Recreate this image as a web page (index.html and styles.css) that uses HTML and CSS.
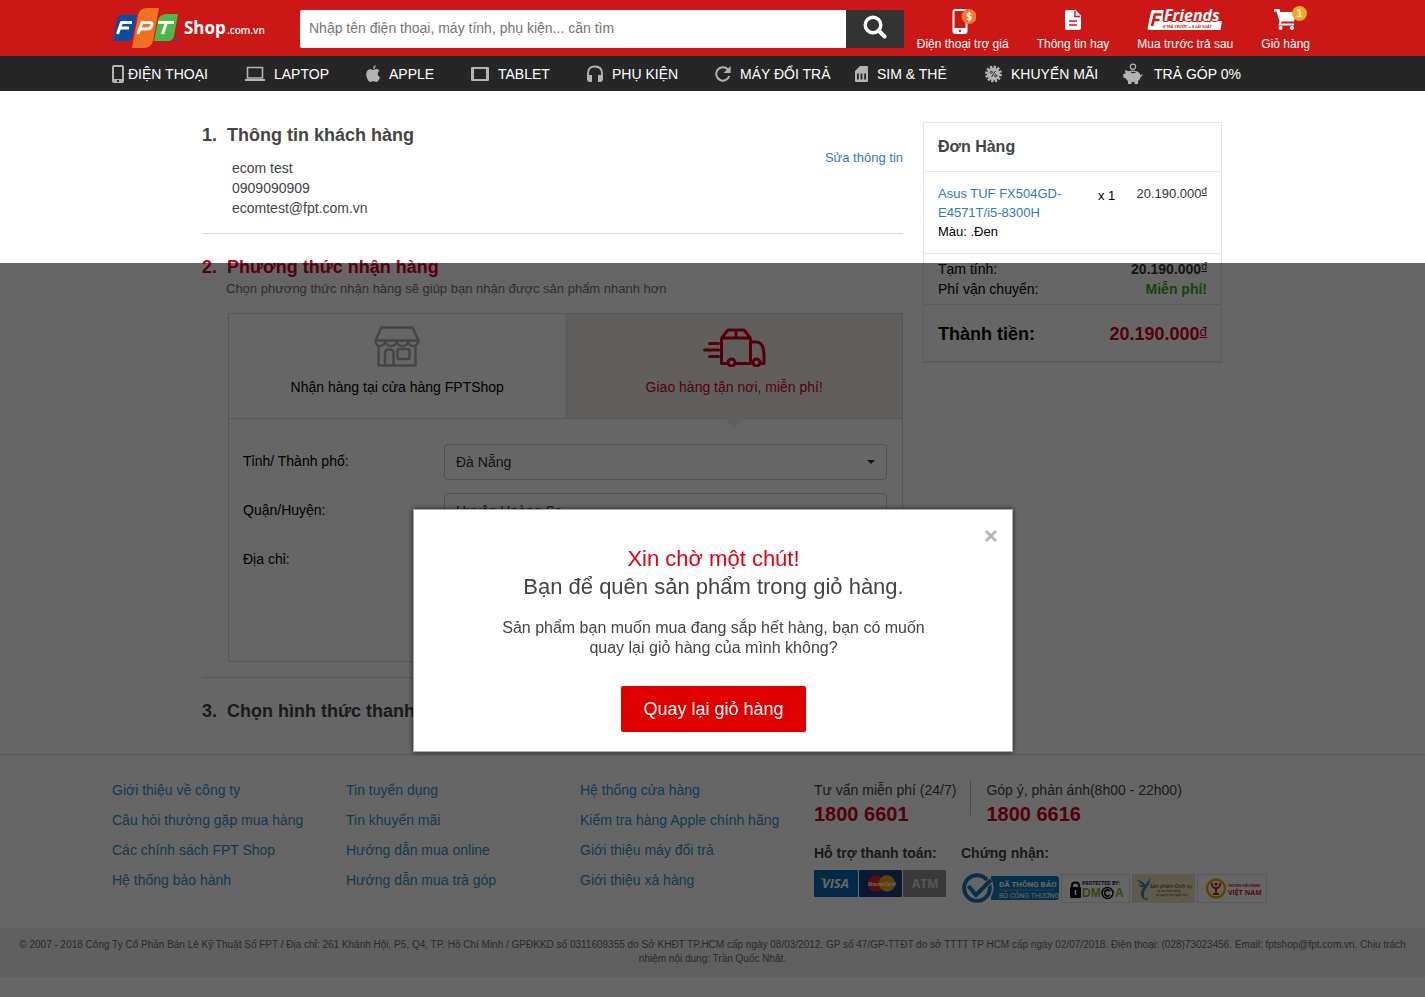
FILE: index.html
```html
<!DOCTYPE html>
<html lang="vi">
<head>
<meta charset="utf-8">
<meta name="viewport" content="width=device-width, initial-scale=1">
<title>FPT Shop - Đặt hàng</title>
<link rel="stylesheet" href="styles.css">
</head>
<body>
<header class="top">
  <div class="wrap top-row">
    <a class="logo" href="#" aria-label="FPT Shop">
      <svg width="154" height="42" viewBox="0 0 154 42">
        <path d="M7 9H25L20 32Q19 35 16 35H1L5 13Q6 9 9 9Z" fill="#0a4da2"/>
        <path d="M55 8H66L62 30Q61 35 56 35H42L46 14Q48 8 55 8Z" fill="#4db848"/>
        <path d="M35 2H47L41 35Q39 42 32 42H20L26 9Q28 2 35 2Z" fill="#f37021"/>
        <g fill="none" stroke="#fff" stroke-width="3" stroke-linejoin="round"><path d="M20 16.500H9.500L5.500 28M8 22H17"/><path d="M26 28L30 16.500H38Q41 17 39.500 20Q38 23 35 23H28"/><path d="M46 16.500H62M54.500 16.500L50.500 28"/></g>
        <circle cx="65.500" cy="33" r="2" fill="none" stroke="#32509a"/>
        <text x="72" y="28" class="logo-shop">Shop</text>
        <text x="115" y="28" class="logo-dom">.com.vn</text>
      </svg>
    </a>
    <form class="search">
      <input type="search" aria-label="Tìm kiếm" placeholder="Nhập tên điện thoại, máy tính, phụ kiện... cần tìm">
      <button type="button" aria-label="Tìm">
        <svg width="24" height="24" viewBox="0 0 24 24" fill="none" stroke="#fff" stroke-width="3.400"><circle cx="10" cy="10" r="7.800"/><path d="M15.500 15.500L21.500 21.500" stroke-width="4" stroke-linecap="round"/></svg>
      </button>
    </form>
    <nav class="actions">
      <a href="#">
        <svg width="26" height="26" viewBox="0 0 26 26"><rect x="3.500" y="2" width="13" height="23" rx="2" fill="none" stroke="#fff" stroke-width="2"/><rect x="3" y="20" width="14" height="5.500" rx="1" fill="#fff"/><circle cx="10" cy="23" r="1.200" fill="#cb1817"/><circle cx="19" cy="8.500" r="7.500" fill="#f4772a"/><path d="M21.500 6.200Q19 4.500 17.500 6Q16.500 8 19 8.500Q22 9.200 21 11Q19.500 12.500 16.800 11M19.200 3.500V13.500" fill="none" stroke="#fff" stroke-width="1.300"/></svg>
        <span>Điện thoại trợ giá</span>
      </a>
      <a href="#">
        <svg width="16" height="26" viewBox="0 0 16 26"><path d="M2 2H10.500L16 7.500V20Q16 22 14 22H2Q0 22 0 20V4Q0 2 2 2Z" fill="#fff"/><path d="M10 3V8.500H15M4 13H12M4 17H12" fill="none" stroke="#cb1817" stroke-width="1.500"/></svg>
        <span>Thông tin hay</span>
      </a>
      <a href="#">
        <svg class="friends-logo" width="76" height="26" viewBox="0 0 76 26"><path d="M6 2H16.500L15.500 13H75L73.500 22H2Q0 22 .6 20L4 4Q4.500 2 6 2Z" fill="#fff"/><path d="M14.500 6.500H8L5 18M7 12H12.500" fill="none" stroke="#cb1817" stroke-width="2.600"/><text x="17" y="13" class="friends">Friends</text><path d="M16 14.500H73.500L72.500 21H15Z" fill="#fff"/><text x="16" y="20" class="friends-sub">0 TRẢ TRƯỚC + 0 LÃI SUẤT</text></svg>
        <span>Mua trước trả sau</span>
      </a>
      <a class="cart" href="#">
        <svg width="24" height="26" viewBox="0 0 24 26"><path d="M0 1H5L6.500 4H22L20 13.500H7.500L7 15.500H20V17.500H4.500L5.500 13L2.500 3.500H0Z" fill="#fff"/><circle cx="6.500" cy="20" r="2" fill="#fff"/><circle cx="18" cy="20" r="2" fill="#fff"/></svg>
        <b class="count">1</b>
        <span>Giỏ hàng</span>
      </a>
    </nav>
  </div>
</header>
<nav class="menu">
  <div class="wrap menu-row">
    <a class="tight" href="#"><svg width="12" height="20" viewBox="0 0 12 20"><path fill-rule="evenodd" d="M2 1H10Q12 1 12 3V17Q12 19 10 19H2Q0 19 0 17V3Q0 1 2 1ZM2 3V15H10V3ZM5 16V18H7V16Z" fill="#b3b3b3"/></svg>ĐIỆN THOẠI</a>
    <a href="#"><svg width="20" height="20" viewBox="0 0 20 20"><path d="M2.500 3.500H17.500V14H2.500Z" fill="none" stroke="#b3b3b3" stroke-width="1.600"/><path d="M0 15H20V17H0Z" fill="#b3b3b3"/></svg>LAPTOP</a>
    <a href="#"><svg width="14" height="20" viewBox="0 0 14 20"><path d="M9.800 1Q10 4 7 5Q6.800 2.200 9.800 1ZM7 6Q9 5 10.500 5Q12.500 5.200 13.500 6.700Q11.500 8 11.700 10.200Q12 12.300 14 13.200Q12.500 17.500 10.500 18Q9 17.300 7.400 17.300Q5.500 17.600 4.500 18Q2.500 18 .8 13.500Q-.8 8 2 6Q4 4.500 7 6Z" fill="#b3b3b3"/></svg>APPLE</a>
    <a href="#"><svg width="18" height="20" viewBox="0 0 18 20"><path fill-rule="evenodd" d="M1 3H17Q18 3 18 4V16Q18 17 17 17H1Q0 17 0 16V4Q0 3 1 3ZM3 5V15H15V5Z" fill="#b3b3b3"/></svg>TABLET</a>
    <a href="#"><svg width="16" height="20" viewBox="0 0 16 20"><path d="M1 16V9.500Q1 2.500 8 2.500T15 9.500V16" fill="none" stroke="#b3b3b3" stroke-width="1.800"/><path d="M1 11H5V18H2.500Q.2 18 .2 15.500V11ZM11 11H15.800V15.500Q15.800 18 13.500 18H11Z" fill="#b3b3b3"/></svg>PHỤ KIỆN</a>
    <a href="#"><svg width="16" height="20" viewBox="0 0 16 20"><path d="M12.800 5.300A6.700 6.700 0 1 0 14.300 12" fill="none" stroke="#b3b3b3" stroke-width="2"/><path d="M15.600 2V9H8.600Z" fill="#b3b3b3"/></svg>MÁY ĐỔI TRẢ</a>
    <a href="#"><svg width="13" height="20" viewBox="0 0 13 20"><path fill-rule="evenodd" d="M5 2H12Q13 2 13 3V17Q13 18 12 18H1Q0 18 0 17V7ZM2 9.500V15.500H3.800V9.500ZM5.600 9.500V15.500H7.400V9.500ZM9.200 9.500V15.500H11V9.500Z" fill="#b3b3b3"/></svg>SIM &amp; THẺ</a>
    <a href="#"><svg width="17" height="20" viewBox="0 0 17 20"><circle cx="8.500" cy="10" r="7" fill="none" stroke="#b3b3b3" stroke-width="3" stroke-dasharray="2.200 1.465"/><circle cx="8.500" cy="10" r="6.500" fill="#b3b3b3"/><path d="M10.500 7L6.500 13" stroke="#262626"/><circle cx="6.300" cy="8.300" r="1.100" fill="none" stroke="#262626"/><circle cx="10.700" cy="11.700" r="1.100" fill="none" stroke="#262626"/></svg>KHUYẾN MÃI</a>
    <a href="#"><svg width="22" height="22" viewBox="0 0 22 22"><circle cx="10" cy="3.700" r="2.600" fill="none" stroke="#b3b3b3" stroke-width="1.200"/><path d="M2 7L5.500 8.200Q10 6.500 14.500 8.500Q17 10 17.500 12.500L19 11L19.600 12L17.500 14.500Q16.500 17 15 18V21H11.500V19H8.500V21H5V18Q3.500 17 3 15.500L.3 14.500V11L2.500 10.500Z" fill="#b3b3b3"/><path d="M8 9.500H12.500" stroke="#262626" stroke-width="1.200"/></svg>TRẢ GÓP 0%</a>
  </div>
</nav>

<main class="checkout">
  <div class="steps">
    <section class="step">
      <h2><span class="no">1.</span>Thông tin khách hàng</h2>
      <div class="customer">
        <ul><li>ecom test</li><li>0909090909</li><li>ecomtest@fpt.com.vn</li></ul>
        <a href="#">Sửa thông tin</a>
      </div>
    </section>
    <section class="step">
      <h2 class="current"><span class="no">2.</span>Phương thức nhận hàng</h2>
      <p class="hint">Chọn phương thức nhận hàng sẽ giúp bạn nhận được sản phẩm nhanh hơn</p>
      <div class="delivery">
        <div class="tabs">
          <button type="button" class="tab">
            <svg width="46" height="42" viewBox="0 0 46 42" fill="none" stroke="#acacac" stroke-width="2.400" stroke-linejoin="round"><path d="M7.500 2.500H38.500L44.500 15.500H1.500Z"/><path d="M1.500 16Q2 21 6 21T11.500 16Q12 21 17 21T23 16Q23.500 21 28.500 21T34 16Q34.500 21 39 21T44.500 16M4.500 21V40.500H41.500V21"/><path d="M11 40.500V28Q11 24.500 14.500 24.500H16Q19.500 24.500 19.500 28V40.500"/><rect x="23.500" y="24" width="12" height="10" rx="2"/></svg>
            Nhận hàng tại cửa hàng FPTShop
          </button>
          <button type="button" class="tab active">
            <svg width="63" height="42" viewBox="0 0 63 42" fill="none" stroke="#d0021b" stroke-width="3" stroke-linejoin="round" stroke-linecap="round"><path d="M6.500 18.500H15.500M1.500 25H15.500M6.500 31.500H15.500"/><path d="M23 38.500H18.500V14.500Q18.500 13 20 13H46Q47.500 13 47.500 14.500V38.500M33 38.500H47.500M19 12.500L25 5H41L47 12.500M33 5V11"/><path d="M48 17H54Q60.500 17.500 61 30V38.500H57.500"/><circle cx="28.500" cy="37.500" r="3.500"/><circle cx="53.500" cy="37.500" r="3.500"/></svg>
            Giao hàng tận nơi, miễn phí!
          </button>
        </div>
        <form class="fields">
          <label for="city">Tỉnh/ Thành phố:</label>
          <span class="pick"><select id="city"><option>Đà Nẵng</option></select></span>
          <label for="district">Quận/Huyện:</label>
          <span class="pick"><select id="district"><option>Huyện Hoàng Sa</option></select></span>
          <label for="address">Địa chỉ:</label>
          <input id="address" type="text">
        </form>
      </div>
    </section>
    <section class="step last">
      <h2><span class="no">3.</span>Chọn hình thức thanh toán</h2>
    </section>
  </div>
  <aside class="order">
    <h3>Đơn Hàng</h3>
    <div class="item">
      <div><a href="#">Asus TUF FX504GD-E4571T/i5-8300H</a><br>Màu: .Đen</div>
      <span class="qty">x 1</span>
      <span class="price">20.190.000<sup>đ</sup></span>
    </div>
    <dl class="sums">
      <dt>Tạm tính:</dt><dd>20.190.000<sup>đ</sup></dd>
      <dt>Phí vận chuyển:</dt><dd class="free">Miễn phí!</dd>
    </dl>
    <div class="total"><span>Thành tiền:</span><strong>20.190.000<sup>đ</sup></strong></div>
  </aside>
</main>

<footer class="foot">
  <div class="wrap foot-row">
    <ul><li><a href="#">Giới thiệu về công ty</a></li><li><a href="#">Câu hỏi thường gặp mua hàng</a></li><li><a href="#">Các chính sách FPT Shop</a></li><li><a href="#">Hệ thống bảo hành</a></li></ul>
    <ul><li><a href="#">Tin tuyển dụng</a></li><li><a href="#">Tin khuyến mãi</a></li><li><a href="#">Hướng dẫn mua online</a></li><li><a href="#">Hướng dẫn mua trả góp</a></li></ul>
    <ul><li><a href="#">Hệ thống cửa hàng</a></li><li><a href="#">Kiểm tra hàng Apple chính hãng</a></li><li><a href="#">Giới thiệu máy đổi trả</a></li><li><a href="#">Giới thiệu xả hàng</a></li></ul>
    <div class="contact">
      <div class="phones">
        <p>Tư vấn miễn phí (24/7)<strong>1800 6601</strong></p>
        <p>Góp ý, phản ánh(8h00 - 22h00)<strong>1800 6616</strong></p>
      </div>
      <div class="trust">
        <div>
          <h4>Hỗ trợ thanh toán:</h4>
          <div class="cards">
            <svg width="44" height="27" viewBox="0 0 44 27"><rect width="44" height="27" rx="1" fill="#0668b3"/><path d="M6 8H11L12.500 13Q9.500 9 6 8.800Z" fill="#f5a623"/><text x="8" y="18" class="visa">VISA</text></svg>
            <svg width="43" height="27" viewBox="0 0 43 27"><rect width="43" height="27" rx="1" fill="#163f83"/><circle cx="17" cy="13.500" r="8.200" fill="#e2231a"/><circle cx="28" cy="13.500" r="8.200" fill="#f5a50a"/><text x="9" y="16" class="mc">MasterCard</text></svg>
            <svg width="43" height="27" viewBox="0 0 43 27"><rect width="43" height="27" rx="1" fill="#8f8f8f"/><text x="9" y="18" class="atm">ATM</text></svg>
          </div>
        </div>
        <div>
          <h4>Chứng nhận:</h4>
          <div class="badges">
            <svg width="98" height="30" viewBox="0 0 98 30"><path d="M30 3H95Q98 3 98 6V24Q98 27 95 27H30Z" fill="#1778b8"/><circle cx="16" cy="15" r="16.500" fill="#fff"/><circle cx="16" cy="15" r="12.800" fill="#fff" stroke="#1778b8" stroke-width="4"/><path d="M7.500 13L15 22L30 7" fill="none" stroke="#fff" stroke-width="6"/><path d="M7.500 13L15 22L30 7" fill="none" stroke="#1778b8" stroke-width="4"/><text x="38" y="14" class="reg">ĐÃ THÔNG BÁO</text><path d="M38 17H93" stroke="#8fc3e6" stroke-width=".6"/><text x="38" y="24.500" class="reg-sub">BỘ CÔNG THƯƠNG</text></svg>
            <svg width="69" height="30" viewBox="0 0 69 30"><rect x=".5" y="1.500" width="68" height="28" fill="#fff" stroke="#e0e0e0"/><text x="21" y="11.500" class="dm-top">PROTECTED BY:</text><path d="M11 15V12Q11 9.500 14.500 9.500T18 12V15" fill="none" stroke="#111" stroke-width="2"/><rect x="9" y="14" width="11" height="11" rx="1" fill="#111"/><path d="M14.500 17V22" stroke="#fff" stroke-width="1.500"/><text x="21" y="24" class="dm">DM</text><circle cx="46.500" cy="20" r="5.500" fill="none" stroke="#111" stroke-width="1.500"/><path d="M49 18.200A3 3 0 1 0 49 21.800" fill="none" stroke="#111" stroke-width="1.800"/><text x="54" y="24" class="dm">A</text></svg>
            <svg width="63" height="30" viewBox="0 0 63 30"><rect y="1" width="63" height="29" fill="#f1e2bf"/><path d="M5 7Q10 7 13 12Q17 8 18 5Q19 9 15 14Q10 20 13 26Q17 22 15 27Q8 26 9 19Q10 15 12 14Q8 15 6 11Q9 13 11 12Q8 10 5 7Z" fill="#3a86a8"/><text x="18" y="15" class="vn-a">Sản phẩm-Dịch vụ</text><text x="25" y="19" class="vn-b">uy tín chất lượng</text><text x="24" y="22.500" class="vn-b">và quyền lợi người tiêu</text></svg>
            <svg width="70" height="30" viewBox="0 0 70 30"><rect x=".5" y="1.500" width="69" height="28" fill="#fff" stroke="#e0e0e0"/><circle cx="19" cy="15.500" r="9" fill="#fff8dc" stroke="#e5a50f" stroke-width="2.400"/><path d="M14.500 10Q15.500 15 19 15.500Q22.500 15 23.500 10M19 15V20.500M16 21H22" fill="none" stroke="#d0161b" stroke-width="1.800"/><circle cx="19" cy="11" r="1.500" fill="#d0161b"/><text x="31" y="14" class="br-a">THƯƠNG HIỆU MẠNH</text><text x="31" y="21.500" class="br-b">VIỆT NAM</text></svg>
          </div>
        </div>
      </div>
    </div>
  </div>
  <p class="copy">© 2007 - 2018 Công Ty Cổ Phần Bán Lẻ Kỹ Thuật Số FPT / Địa chỉ: 261 Khánh Hội, P5, Q4, TP. Hồ Chí Minh / GPĐKKD số 0311609355 do Sở KHĐT TP.HCM cấp ngày 08/03/2012. GP số 47/GP-TTĐT do sở TTTT TP HCM cấp ngày 02/07/2018. Điện thoại: (028)73023456. Email: fptshop@fpt.com.vn. Chịu trách nhiệm nội dung: Trần Quốc Nhật.</p>
</footer>

<div class="overlay">
  <div class="modal" role="dialog" aria-labelledby="modal-title">
    <button type="button" class="close" aria-label="Đóng"><svg width="12" height="12" viewBox="0 0 12 12" stroke="#b5b5b5" stroke-width="2.600"><path d="M1 1L11 11M11 1L1 11"/></svg></button>
    <h2 id="modal-title"><em>Xin chờ một chút!</em>Bạn để quên sản phẩm trong giỏ hàng.</h2>
    <p>Sản phẩm bạn muốn mua đang sắp hết hàng, bạn có muốn quay lại giỏ hàng của mình không?</p>
    <button type="button" class="back">Quay lại giỏ hàng</button>
  </div>
</div>
</body>
</html>
```
FILE: styles.css
```css
* { box-sizing: border-box; }
body {
  margin: 0;
  font: 14px/20px "Liberation Sans", Arial, sans-serif;
  color: #444;
  background: #fff;
}
h2, h3, h4, p, ul, dl, dd { margin: 0; padding: 0; }
ul { list-style: none; }
a { color: #337ab7; text-decoration: none; }
button, input, select { font: inherit; }
button { cursor: pointer; border: 0; }
svg { display: block; flex: none; }
sup { font-size: 75%; line-height: 0; vertical-align: 4px; text-decoration: underline; font-weight: normal; }
.wrap { max-width: 1201px; margin: 0 auto; }

/* header */
.top { background: #cb1817; }
.top-row { display: flex; height: 56px; }
.logo { width: 188px; padding-top: 6px; }
.logo-shop { font: bold 17px "Open Sans", sans-serif; fill: #fff; }
.logo-dom { font: 600 10px "Open Sans", sans-serif; fill: #fff; }
.search { flex: 1; display: flex; height: 38px; margin: 10px 13px 0 0; }
.search input {
  flex: 1;
  min-width: 0;
  border: 0;
  border-radius: 2px 0 0 2px;
  padding: 0 9px 2px;
  color: #444;
  background: #fff;
}
.search input::placeholder { color: #757575; }
.search button {
  width: 58px;
  display: flex;
  align-items: center;
  justify-content: center;
  padding: 0 0 4px;
  background: #333;
  border-radius: 0 2px 2px 0;
}
.actions { display: flex; gap: 28px; padding: 8px 3px 0 0; }
.actions a {
  position: relative;
  display: flex;
  flex-direction: column;
  align-items: center;
  gap: 2px;
  font-size: 12px;
  line-height: 16px;
  color: #fff;
  white-space: nowrap;
}
.friends-logo { overflow: visible; }
.friends { font: italic bold 16px "Open Sans", sans-serif; fill: #fff; stroke: #cb1817; stroke-width: 2px; paint-order: stroke; }
.friends-sub { font: italic bold 4px "Open Sans", sans-serif; fill: #cb1817; }
.count {
  position: absolute;
  top: -2px;
  right: 3px;
  width: 15px;
  height: 15px;
  border-radius: 50%;
  background: #f5a623;
  font-size: 10px;
  line-height: 15px;
  text-align: center;
}

/* category menu */
.menu { background: #262626; }
.menu-row {
  display: grid;
  grid-template-columns: 133px 121px 105px 116px 128px 140px 130px 138px auto;
  height: 35px;
}
.menu a { display: flex; align-items: center; gap: 9px; color: #fff; white-space: nowrap; }
.menu a.tight { gap: 4px; }

/* checkout */
.checkout {
  display: grid;
  grid-template-columns: 1fr 299px;
  gap: 20px;
  align-items: start;
  max-width: 1021px;
  margin: 0 auto;
  padding: 31px 1px 0 0;
}
.step { border-bottom: 1px solid #d7d7d7; padding-bottom: 15px; margin-bottom: 20px; }
.step.last { border: 0; margin: 0; padding-bottom: 30px; }
.step h2 { display: flex; font-size: 18px; line-height: 26px; }
.step h2.current { color: #d0021b; }
.no { width: 25px; }
.customer { display: flex; justify-content: space-between; padding-left: 30px; }
.customer ul { padding-top: 10px; }
.customer a { font-size: 13px; }
.hint { padding-left: 24px; font-size: 13px; line-height: 18px; color: #737373; }
.delivery { margin: 15px 0 0 26px; border: 1px solid #d7d7d7; }
.tabs { display: grid; grid-template-columns: 1fr 1fr; border-bottom: 1px solid #d7d7d7; }
.tab {
  display: flex;
  flex-direction: column;
  align-items: center;
  gap: 10px;
  padding: 11px 0 21px;
  background: #fff;
  color: #000;
}
.tab.active { position: relative; background: #f3eee8; color: #d0021b; border-left: 1px solid #d7d7d7; }
.tab.active::after {
  content: "";
  position: absolute;
  top: 100%;
  left: calc(50% - 10px);
  border: 10px solid transparent;
  border-top-color: #f3eee8;
  border-bottom: 0;
}
.fields {
  display: grid;
  grid-template-columns: 201px 1fr;
  row-gap: 13px;
  align-items: center;
  padding: 25px 15px 83px 14px;
  color: #000;
}
.fields label { padding-bottom: 2px; }
.fields select, .fields input {
  display: block;
  width: 100%;
  height: 36px;
  padding: 0 11px;
  border: 1px solid #c8c8c8;
  border-radius: 4px;
  background: #fff;
  color: #333;
  appearance: none;
}
.pick { position: relative; }
.pick::after {
  content: "";
  position: absolute;
  right: 12px;
  top: 16px;
  border: 4px solid transparent;
  border-top-color: #333;
  border-bottom: 0;
}

/* order summary */
.order { border: 1px solid #e5e5e5; border-bottom-width: 2px; color: #000; }
.order h3 { padding: 14px; font-size: 16px; line-height: 20px; color: #444; border-bottom: 1px solid #e5e5e5; }
.item { display: grid; grid-template-columns: 160px 1fr auto; padding: 12px 14px; font-size: 13px; line-height: 19px; border-bottom: 1px solid #e5e5e5; }
.item div { padding-right: 24px; }
.qty { padding-top: 2px; }
.price { color: #333; }
.sums { display: grid; grid-template-columns: 1fr auto; padding: 5px 14px; border-bottom: 1px solid #e5e5e5; }
.sums dd { font-weight: bold; text-align: right; color: #333; }
.sums dd.free { color: #38a815; }
.total { display: flex; justify-content: space-between; padding: 15px 14px 13px; font-size: 18px; line-height: 28px; font-weight: bold; }
.total strong { color: #d0021b; }

/* footer */
.foot { border-top: 1px solid #d7d7d7; }
.foot-row { display: grid; grid-template-columns: 234px 234px 234px 1fr; padding: 20px 0 25px; align-items: start; }
.foot-row li { line-height: 30px; }
.foot-row li a { color: #2f8fc9; }
.phones { display: flex; height: 53px; padding-top: 5px; white-space: nowrap; }
.phones p + p { margin-left: 14px; padding-left: 15px; border-left: 1px solid #bbb; height: 35px; }
.phones strong { display: block; font-size: 20px; line-height: 28px; color: #d0021b; }
.trust { display: flex; gap: 24px; margin-top: 15px; white-space: nowrap; }
.trust > div:first-child { width: 123px; }
.trust h4 { font-size: 14px; line-height: 20px; }
.cards { display: flex; gap: 1px; margin-top: 7px; }
.badges { display: flex; gap: 2px; margin-top: 10px; }
.visa { font: italic bold 13px "Open Sans", sans-serif; fill: #fff; }
.mc { font: italic bold 5px "Open Sans", sans-serif; fill: #fff; }
.atm { font: bold 12px "Open Sans", sans-serif; fill: #d9d9d9; }
.reg { font: bold 8px "Roboto", sans-serif; fill: #fff; }
.reg-sub { font: 7px "Roboto", sans-serif; fill: #fff; }
.dm-top { font: bold 5px "Open Sans", sans-serif; fill: #111; }
.dm { font: bold 12px "Liberation Sans", sans-serif; fill: #76b82a; }
.vn-a { font: 5px "Open Sans", sans-serif; fill: #222; }
.vn-b { font: 3px "Open Sans", sans-serif; fill: #222; }
.br-a { font: bold 3px "Open Sans", sans-serif; fill: #d0161b; }
.br-b { font: bold 7px "Open Sans", sans-serif; fill: #d0161b; }
.copy { padding: 10px 15px 11px; background: #f0f0f0; color: #666; font-size: 10px; line-height: 14px; text-align: center; }

/* reminder dialog */
.overlay {
  position: fixed;
  inset: 263px 0 0;
  display: flex;
  align-items: center;
  justify-content: center;
  background: rgba(0, 0, 0, .6);
}
.modal {
  position: relative;
  width: 600px;
  padding: 35px 79px 19px 81px;
  text-align: center;
  background: #fff;
  border: 1px solid #aaa;
  box-shadow: 0 0 5px rgba(0, 0, 0, .7);
}
.close { position: absolute; top: 20px; right: 15px; padding: 0; background: none; }
.modal h2 { font-size: 22px; line-height: 28px; font-weight: normal; }
.modal em { display: block; font-style: normal; color: #e30010; }
.modal p { margin: 17px 0 28px; font-size: 16px; }
.back { height: 46px; padding: 0 22px; font-size: 18px; color: #fff; background: #e10000; border-radius: 2px; }
```
